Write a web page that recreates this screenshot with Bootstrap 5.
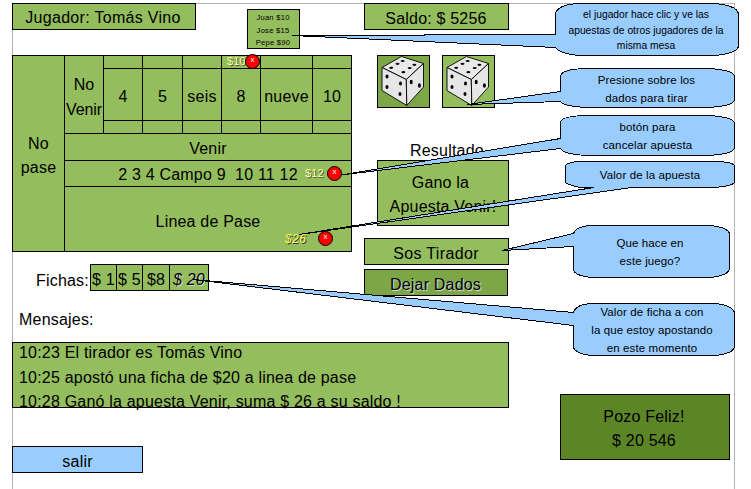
<!DOCTYPE html>
<html lang="es">
<head>
<meta charset="utf-8">
<meta name="viewport" content="width=device-width, initial-scale=1">
<title>Mesa de dados</title>
<link href="https://cdn.jsdelivr.net/npm/bootstrap@5.3.0/dist/css/bootstrap.min.css" rel="stylesheet">
<style>
  body { font: 16px/24.5px "Liberation Sans", Arial, sans-serif; color: #000; background: #fff; letter-spacing: .2px; }
  .mesa { width: 751px; height: 489px; padding: 3px 0 0 12px; }
  .marco { left: 12px; top: 3px; width: 723px; height: 500px; border: 1px solid #b3b3b3; }
  .superior { height: 339px; }
  .caja { background: #94bd5e; border: 1px solid #000; white-space: nowrap; }
  .caja.oscura { background: #7da647; }
  .caja.pozo { background: #5c8526; width: 170px; height: 66px; margin: 52px 0 0 51px; padding: 10px 2px 0 0; line-height: 24px; }
  .caja.azul { background: #9cf; width: 131px; height: 27px; margin-top: 38px; padding-top: 3px; }
  .izq { width: 352px; }
  .der { width: 145px; }
  .barra { height: 27px; line-height: 25px; padding: 2px 1px 0 0; }
  .jugador { width: 184px; padding-top: 1px; padding-right: 2px; letter-spacing: .3px; }
  .otros { width: 53px; height: 40px; margin: 6px 0 0 51px; padding: 2px 1px 0 0; font-size: 7.6px; line-height: 12.7px; letter-spacing: .25px; }
  .cabecera { height: 52px; }
  .tablero { width: 340px; height: 197px; padding: 1px; gap: 1px; background: #000; display: grid;
    grid-template-columns: 51px 38px 38px 39px 38px 38px 51px 38px;
    grid-template-rows: 12px 51px 12px 26px 25px 64px; }
  .tablero > div { background: #94bd5e; display: flex; align-items: center; justify-content: center; text-align: center; white-space: nowrap; padding-top: 5px; }
  .tablero .nopase { grid-row: 1 / 7; }
  .tablero .novenir { grid-row: 1 / 4; padding-top: 6px; letter-spacing: -.1px; }
  .tablero .ancha { grid-column: 2 / 9; }
  .tablero .campo { padding-top: 3px; }
  .tablero .linea { padding-top: 6px; }
  .dados { margin: 25px 0 0 13px; gap: 12px; }
  .dado { width: 53px; height: 53px; }
  .titulo { height: 21px; margin: 31px 0 0 46px; }
  .resultado { width: 132px; height: 66px; padding-top: 10px; line-height: 24px; }
  .resultado .gano { padding-right: 5px; }
  .tirador { margin-top: 12px; letter-spacing: .35px; }
  .dejar { margin-top: 4px; width: 144px; }
  .sombra { text-shadow: 1px 1px 1px #ddd; }
  .fichas { height: 27px; margin: 12px 0 0 24px; }
  .fichas .caja { height: 27px; line-height: 25px; padding-top: 2px; margin-left: -1px; text-align: center; }
  .rotulo { width: 55px; padding-top: 5px; }
  .f1 { width: 27px; } .f2 { width: 28px; } .f3 { width: 40px; }
  .lema { padding-left: 7px; margin-top: 17px; }
  .mensajes { width: 497px; height: 66px; padding-left: 6px; }
  .mensajes > div { position: relative; top: -2px; }
  .apuesta { font-size: 11px; line-height: 12px; color: #ffff99; text-shadow: 1px 1px 0 #555; letter-spacing: .1px; }
  .apuesta.activa { font-size: 12px; color: #ffff55; text-shadow: 1px 1px 0 #333; letter-spacing: .4px; }
  .quitar { width: 15px; height: 15px; border: 1px solid #000; border-radius: 50%; background: #f00; color: #fff; font-size: 8px; line-height: 10px; text-align: center; letter-spacing: 0; }
  .nota { font-size: 11.5px; line-height: 18px; text-align: center; white-space: nowrap; letter-spacing: .12px; }
  .nota.chica { font-size: 10.3px; line-height: 15.5px; letter-spacing: 0; }
</style>
<script src="https://cdn.jsdelivr.net/npm/bootstrap@5.3.0/dist/js/bootstrap.bundle.min.js"></script>
</head>
<body class="m-0 overflow-hidden">
<div class="mesa position-relative overflow-hidden">
  <div class="marco position-absolute"></div>

  <div class="superior d-flex position-relative">
    <div class="izq">
      <div class="cabecera d-flex align-items-start">
        <div class="caja barra jugador text-center">Jugador: Tomás Vino</div>
        <div class="caja otros text-center">Juan $10<br>Jose $15<br>Pepe $90</div>
      </div>
      <div class="tablero">
        <div class="nopase">No<br>pase</div>
        <div class="novenir">No<br>Venir</div>
        <div></div><div></div><div></div><div></div><div></div><div></div>
        <div>4</div><div>5</div><div>seis</div><div>8</div><div>nueve</div><div>10</div>
        <div></div><div></div><div></div><div></div><div></div><div></div>
        <div class="ancha">Venir</div>
        <div class="ancha campo">2 3 4 Campo 9 &nbsp;10 11 12</div>
        <div class="ancha linea">Linea de Pase</div>
      </div>
      <div class="fichas d-flex">
        <div class="rotulo">Fichas:</div>
        <div class="caja f1">$ 1</div>
        <div class="caja f1">$ 5</div>
        <div class="caja f2">$8</div>
        <div class="caja f3 fst-italic sombra">$ 20</div>
      </div>
      <div class="lema">Mensajes:</div>
    </div>

    <div class="der">
      <div class="caja barra text-center">Saldo: $ 5256</div>
      <div class="dados d-flex">
        <div class="caja oscura dado"><svg class="d-block" width="51" height="51" viewBox="1 1 51 51"><use href="#cubo"/></svg></div>
        <div class="caja dado"><svg class="d-block" width="51" height="51" viewBox="1 1 51 51"><use href="#cubo"/></svg></div>
      </div>
      <div class="titulo">Resultado</div>
      <div class="caja resultado text-center ms-auto"><div class="gano">Gano la</div>Apuesta Venir!</div>
      <div class="caja barra tirador text-center">Sos Tirador</div>
      <div class="caja oscura barra dejar text-center sombra">Dejar Dados</div>
    </div>
  </div>

  <div class="d-flex position-relative">
    <div>
      <div class="caja mensajes">
        <div>10:23 El tirador es Tomás Vino</div>
        <div>10:25 apostó una ficha de $20 a linea de pase</div>
        <div>10:28 Ganó la apuesta Venir, suma $ 26 a su saldo !</div>
      </div>
      <div class="caja azul text-center">salir</div>
    </div>
    <div class="caja pozo text-center">Pozo Feliz!<br>$ 20 546</div>
  </div>

  <!-- Fichas apostadas sobre el tablero -->
  <div class="apuesta position-absolute" style="left:227px;top:55px">$10</div>
  <div class="apuesta position-absolute" style="left:305px;top:167px">$12</div>
  <div class="apuesta activa position-absolute fst-italic" style="left:285px;top:233px">$26</div>
  <div class="quitar position-absolute" style="left:245px;top:54px">x</div>
  <div class="quitar position-absolute" style="left:327px;top:166px">x</div>
  <div class="quitar position-absolute" style="left:318px;top:231px">x</div>

  <!-- Globos de ayuda -->
  <svg class="position-absolute top-0 start-0" width="751" height="489" fill="#9cf" stroke="#000" stroke-width="1" shape-rendering="crispEdges">
    <path d="M555.5 34.5V13.5Q558 4 580.5 3.5H713.5Q736 5 738.5 13.5V46.5Q736 54 713.5 55.5H580.5Q560 54 555.5 47.5L292 35.5H424V34.5Z"/>
    <path d="M560.5 91.5V75.5Q563 69 586.5 68.5H708.5Q732 70 734.5 75.5V100.5Q732 106 708.5 107.5H586.5Q563 106 560.5 101.5L467 104.5Z"/>
    <path d="M560.5 138.5V121.5Q563 116 586.5 115.5H708.5Q732 117 734.5 122.5V148.5Q732 154 708.5 155.5H586.5Q563 154 560.5 148.5L341 175Z"/>
    <path d="M594 187.5L577.5 187Q567 184 565.5 182.5V165.5Q568 162 580.5 161.5H716.5Q732 162 734.5 165.5V182.5Q732 186 714.5 187.5H632L299 234.5Z"/>
    <path d="M573.5 233.5Q576 226 592.5 225.5H709.5Q727 227 729.5 233.5V269.5Q727 276 709.5 277.5H592.5Q576 276 573.5 270.5V246.5L502 250.5Z"/>
    <path d="M573.5 312.5Q576 304 592.5 303.5H714.5Q732 305 734.5 312.5V347.5Q732 354 714.5 355.5H592.5Q576 354 573.5 347.5V325.5L193 279.5Z"/>
  </svg>
  <div class="nota chica position-absolute" style="left:555px;top:7px;width:182px">el jugador hace clic y ve las<br>apuestas de otros jugadores de la<br>misma mesa</div>
  <div class="nota position-absolute" style="left:560px;top:71px;width:173px">Presione sobre los<br>dados para tirar</div>
  <div class="nota position-absolute" style="left:560px;top:118px;width:175px">botón para<br>cancelar apuesta</div>
  <div class="nota position-absolute" style="left:565px;top:166px;width:170px">Valor de la apuesta</div>
  <div class="nota position-absolute" style="left:573px;top:234px;width:154px">Que hace en<br>este juego?</div>
  <div class="nota position-absolute" style="left:573px;top:303px;width:158px">Valor de ficha a con<br>la que estoy apostando<br>en este momento</div>

  <svg width="0" height="0" class="position-absolute">
    <defs>
      <g id="cubo" stroke="#000" stroke-width=".9" stroke-linejoin="round">
        <path fill="#e9e9e9" d="M24.5 1.5L46.5 8.5L29.3 24.5L5 12.5Z"/>
        <path fill="#e6e6e6" d="M5 12.5L29.3 24.5L29.8 50.5L5 35.5Z"/>
        <path fill="#e6e6e6" d="M46.5 8.5V32L29.8 50.5L29.3 24.5Z"/>
        <g fill="#000" stroke="none">
          <ellipse cx="25.7" cy="6" rx="2" ry="1.1"/><ellipse cx="20.5" cy="8.8" rx="2" ry="1.1"/><ellipse cx="14.2" cy="12.8" rx="2" ry="1.1"/>
          <ellipse cx="37.4" cy="9.8" rx="2" ry="1.1"/><ellipse cx="32.7" cy="13" rx="2" ry="1.1"/><ellipse cx="26.4" cy="17.2" rx="2" ry="1.1"/>
          <ellipse cx="10" cy="21.5" rx="1.5" ry="2"/><ellipse cx="10" cy="32" rx="1.5" ry="2"/>
          <ellipse cx="23.5" cy="28.5" rx="1.5" ry="2"/><ellipse cx="23" cy="39" rx="1.5" ry="2"/>
          <ellipse cx="34.2" cy="27" rx="1.5" ry="2.2"/><ellipse cx="42.4" cy="30.5" rx="1.5" ry="2.2"/>
        </g>
      </g>
    </defs>
  </svg>
</div>
</body>
</html>
